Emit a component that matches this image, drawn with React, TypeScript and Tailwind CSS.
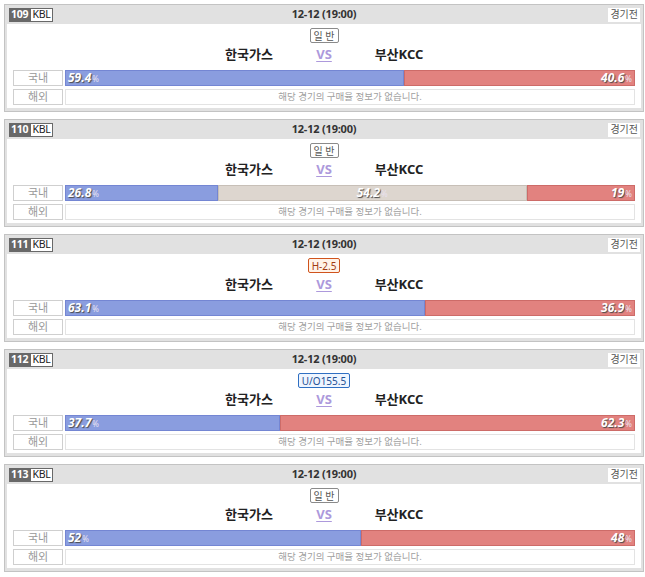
import React from 'react';

type Game = {
  no: number;
  tag: { text: string; kind: 'normal' | 'handi' | 'uo' };
  home: number;
  draw?: number;
  away: number;
};

const GAMES: Game[] = [
  { no: 109, tag: { text: '일 반', kind: 'normal' }, home: 59.4, away: 40.6 },
  { no: 110, tag: { text: '일 반', kind: 'normal' }, home: 26.8, draw: 54.2, away: 19 },
  { no: 111, tag: { text: 'H-2.5', kind: 'handi' }, home: 63.1, away: 36.9 },
  { no: 112, tag: { text: 'U/O155.5', kind: 'uo' }, home: 37.7, away: 62.3 },
  { no: 113, tag: { text: '일 반', kind: 'normal' }, home: 52, away: 48 },
];

const font = { fontFamily: '"Noto Sans", "Noto Sans CJK KR", sans-serif' };

const tagStyles: Record<string, string> = {
  normal: 'border-[#8a8a8a] bg-white text-[#555]',
  handi: 'border-[#d0531c] bg-[#fff3e8] text-[#a13a10]',
  uo: 'border-[#2f6fc2] bg-[#eef5ff] text-[#1d4f93]',
};

const Pct = ({ value }: { value: number }) => (
  <span className="flex items-baseline text-white font-bold italic text-[12px] leading-none [text-shadow:1px_1px_1px_#4a4a4a]">
    {value}
    <span className="text-[8px] not-italic font-normal text-[#e9e2f0] ml-[1px] [text-shadow:none]">%</span>
  </span>
);

const Bar = ({ game }: { game: Game }) => (
  <div className="flex flex-1 h-[16px]">
    <div
      className="h-full bg-[#8a9ddf] border border-[#7486d3] flex items-center pl-[2px]"
      style={{ width: `${game.home}%` }}
    >
      <Pct value={game.home} />
    </div>
    {game.draw !== undefined && (
      <div
        className="h-full bg-[#ddd6cf] border border-[#c7bfb7] flex items-center justify-center"
        style={{ width: `${game.draw}%` }}
      >
        <Pct value={game.draw} />
      </div>
    )}
    <div
      className="h-full bg-[#e2827f] border border-[#cd6b68] flex items-center justify-end pr-[2px]"
      style={{ width: `${game.away}%` }}
    >
      <Pct value={game.away} />
    </div>
  </div>
);

const GameCard = ({ game }: { game: Game }) => (
  <div className="w-[640px] border border-[#c3c3c3] bg-[#e1e1e1] px-[2px] pb-[3px]">
    {/* header */}
    <div className="h-[19px] flex items-center justify-between px-[2px] relative">
      <div className="flex items-center h-[14px] text-[10.5px] leading-none tracking-[-0.2px]">
        <span className="h-full flex items-center bg-[#686868] text-white font-bold px-[2px]">{game.no}</span>
        <span className="h-full flex items-center bg-white text-[#222] border border-[#686868] px-[1px]">KBL</span>
      </div>
      <span className="absolute left-1/2 -translate-x-1/2 text-[11px] font-bold text-[#333] tracking-[-0.2px]">12-12 (19:00)</span>
      <span className="h-[14px] flex items-center bg-white text-[#555] text-[10px] px-[2px] mr-[-1px]">경기전</span>
    </div>

    {/* body */}
    <div className="bg-white h-[84px] pt-[4px] px-[6px] flex flex-col">
      <div className="flex justify-center">
        <span className={`h-[15px] flex items-center border rounded-[2px] px-[3px] text-[10px] leading-none ${tagStyles[game.tag.kind]}`}>
          {game.tag.text}
        </span>
      </div>
      <div className="h-[24px] flex items-center justify-center">
        <span className="w-[100px] text-center text-[13px] font-bold text-[#222]">한국가스</span>
        <span className="w-[50px] text-center text-[13px] font-bold text-[#ad99dc] underline underline-offset-2">VS</span>
        <span className="w-[100px] text-center text-[13px] font-bold text-[#222]">부산KCC</span>
      </div>
      <div className="mt-[3px] flex items-center gap-[2px]">
        <span className="w-[50px] h-[16px] flex items-center justify-center border border-[#cfcfcf] text-[#999] text-[11px]">국내</span>
        <Bar game={game} />
      </div>
      <div className="mt-[3px] flex items-center gap-[2px]">
        <span className="w-[50px] h-[16px] flex items-center justify-center border border-[#cfcfcf] text-[#999] text-[11px]">해외</span>
        <div className="flex-1 h-[16px] border border-[#e3e3e3] flex items-center justify-center text-[9.5px] text-[#a0a0a0]">
          해당 경기의 구매율 정보가 없습니다.
        </div>
      </div>
    </div>
  </div>
);

export default function App() {
  return (
    <div className="bg-white w-[645px] h-[577px] pl-[4px] pt-[4px] flex flex-col gap-[7px]" style={font}>
      {GAMES.map((g) => (
        <GameCard key={g.no} game={g} />
      ))}
    </div>
  );
}
